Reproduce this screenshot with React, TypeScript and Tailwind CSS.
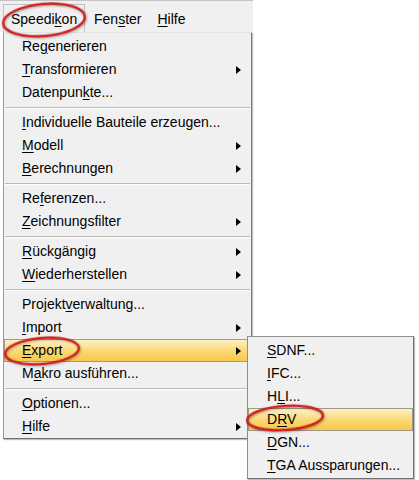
import React from "react";

type Item =
  | { sep: true }
  | { label: string; key: number; sub?: boolean; active?: boolean };

const mainItems: Item[] = [
  { label: "Regenerieren", key: 2 },
  { label: "Transformieren", key: 0, sub: true },
  { label: "Datenpunkte...", key: 8 },
  { sep: true },
  { label: "Individuelle Bauteile erzeugen...", key: 0 },
  { label: "Modell", key: 0, sub: true },
  { label: "Berechnungen", key: 0, sub: true },
  { sep: true },
  { label: "Referenzen...", key: 2 },
  { label: "Zeichnungsfilter", key: 0, sub: true },
  { sep: true },
  { label: "Rückgängig", key: 0, sub: true },
  { label: "Wiederherstellen", key: 0, sub: true },
  { sep: true },
  { label: "Projektverwaltung...", key: 7 },
  { label: "Import", key: 0, sub: true },
  { label: "Export", key: 0, sub: true, active: true },
  { label: "Makro ausführen...", key: 1 },
  { sep: true },
  { label: "Optionen...", key: 0 },
  { label: "Hilfe", key: 0, sub: true },
];

const exportItems = [
  { label: "SDNF...", key: 0 },
  { label: "IFC...", key: 0 },
  { label: "HLI...", key: 1 },
  { label: "DRV", key: 1, active: true },
  { label: "DGN...", key: 0 },
  { label: "TGA Aussparungen...", key: 0 },
];

function Label({ text, k }: { text: string; k: number }) {
  return (
    <span>
      {text.slice(0, k)}
      <span className="underline underline-offset-[2px]">{text[k]}</span>
      {text.slice(k + 1)}
    </span>
  );
}

function Arrow() {
  return (
    <svg width="5" height="8" viewBox="0 0 5 8" className="shrink-0">
      <path d="M0 0 L5 4 L0 8 Z" fill="#000" />
    </svg>
  );
}

const hl =
  "border border-[#a09a86] bg-gradient-to-b from-[#fdf0c4] via-[#fbd977] to-[#f7c849]";

export default function App() {
  return (
    <div
      className="relative h-[480px] w-[419px] overflow-hidden bg-white text-[14px] text-black"
      style={{ fontFamily: '"Liberation Sans", Arial, sans-serif' }}
    >
      {/* Menüleiste */}
      <div className="flex h-[32px] w-[253px] items-end border-t border-[#c4c4c4] bg-[#f0f0f0]">
        <div className="ml-[3px] flex h-[28px] w-[82px] items-center border border-b-0 border-[#c2c2c2] pl-[7px] pt-[2px]">
          <Label text="Speedikon" k={6} />
        </div>
        <div className="ml-[9px] flex h-[28px] items-center pt-[2px]">
          <Label text="Fenster" k={3} />
        </div>
        <div className="ml-[16px] flex h-[28px] items-center pt-[2px]">
          <Label text="Hilfe" k={0} />
        </div>
      </div>

      {/* Hauptmenü */}
      <div className="ml-[3px] w-[249px] border border-t-[#e4e4e4] border-[#9a9a9a] border-b-[#6f6f6f] border-r-[#7d7d7d] bg-[#f0f0f0] pt-[2px] shadow-[1px_1px_1px_rgba(0,0,0,0.25)]">
        {mainItems.map((it, i) =>
          "sep" in it ? (
            <div key={i} className="flex h-[7px] flex-col justify-center px-[1px]">
              <div className="h-px bg-[#b9b9b9]" />
              <div className="h-px bg-white" />
            </div>
          ) : (
            <div key={i} className="h-[23px] pr-[2px]">
              <div
                className={`flex h-full items-center justify-between pl-[17px] pr-[7px] ${
                  it.active ? hl : "border border-transparent"
                }`}
              >
                <Label text={it.label} k={it.key} />
                {it.sub && <Arrow />}
              </div>
            </div>
          )
        )}
      </div>

      {/* Untermenü Export */}
      <div className="absolute left-[247px] top-[336px] w-[167px] border border-[#8e8e8e] border-b-[#6f6f6f] border-r-[#6f6f6f] bg-[#f0f0f0] pt-[2px] pb-[1px] shadow-[1px_1px_1px_rgba(0,0,0,0.25)]">
        {exportItems.map((it, i) => (
          <div
            key={i}
            className={`flex h-[23px] items-center pl-[18px] ${
              it.active ? hl : "border border-transparent"
            }`}
          >
            <Label text={it.label} k={it.key} />
          </div>
        ))}
      </div>

      {/* Rote Markierungen */}
      <svg
        className="pointer-events-none absolute left-0 top-0"
        width="419"
        height="480"
        viewBox="0 0 419 480"
      >
        <g fill="none" stroke="#d0201f" strokeWidth="2.5" style={{ filter: "drop-shadow(1px 1px 1px rgba(0,0,0,0.3))" }}>
          <ellipse cx="44" cy="20" rx="41" ry="16" transform="rotate(-5 44 20)" />
          <ellipse cx="42" cy="351" rx="37" ry="13" transform="rotate(-5 42 351)" />
          <ellipse cx="285" cy="418" rx="38" ry="12" transform="rotate(-4 285 418)" />
        </g>
      </svg>
    </div>
  );
}
